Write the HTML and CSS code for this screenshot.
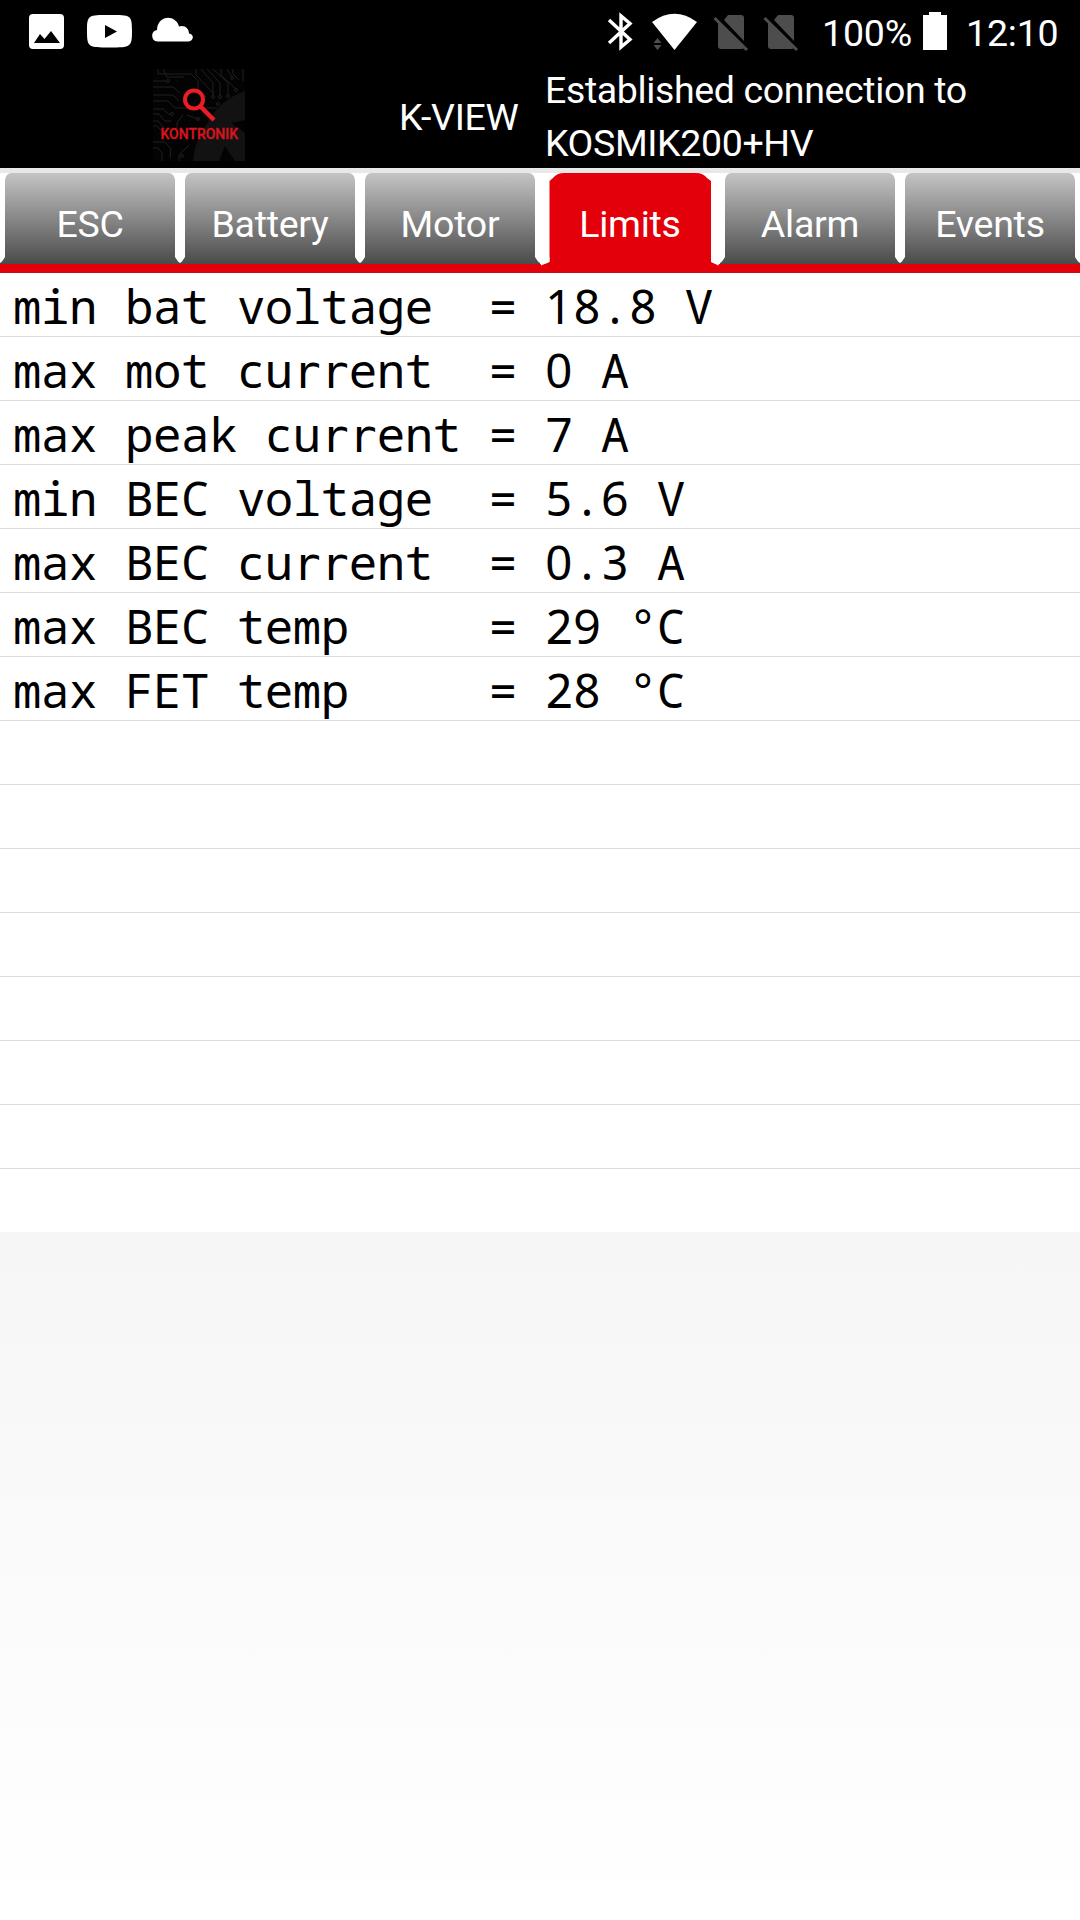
FILE: index.html
```html
<!DOCTYPE html>
<html lang="en">
<head>
<meta charset="utf-8">
<title>K-VIEW</title>
<link rel="stylesheet" href="styles.css">
</head>
<body>
<svg class="defs" aria-hidden="true">
  <defs>
    <linearGradient id="gray" x1="0" y1="0" x2="0" y2="1">
      <stop offset="0" stop-color="#c4c4c4"/><stop offset="1" stop-color="#4b4b4b"/>
    </linearGradient>
    <symbol id="tab" viewBox="0 0 180 91">
      <path fill="url(#gray)" d="M0 91V90L2 88.500L5 84V7Q5.500 1 11 0H169Q174.500 1 175 7V84L178 88.500L180 90V91Z"/>
    </symbol>
    <symbol id="tab-on" viewBox="0 0 180 93">
      <path fill="#e3000b" d="M0 91V90.500L1 93L9.500 88.500V8L13 5Q17 0 24 0H156Q163 0 167 5L171 8V88.500L179 92.500L180 90.500V93H0Z"/>
      <path fill="#fff" d="M0 85L1 92.500L9.500 89V84H0ZM180 84L178.500 92.500L171 89V84Z"/>
    </symbol>
    <symbol id="sim" viewBox="0 0 36 40">
      <path fill="#4d4d4d" d="M11 7L15 2H28Q31 2 31 5V28ZM5 9L31 35Q30 36 28 36H8Q5 36 5 33Z"/>
      <path stroke="#4d4d4d" stroke-width="3" d="M1.500 5L34 37"/>
    </symbol>
  </defs>
</svg>
<div class="status">
  <svg class="status-icons" width="240" height="64" viewBox="0 0 240 64">
    <path fill="#fff" fill-rule="evenodd" d="M33 14H60Q64 14 64 18V45Q64 49 60 49H33Q29 49 29 45V18Q29 14 33 14ZM34 43H60L51 31L44.500 39L40 34Z"/>
    <path fill="#fff" fill-rule="evenodd" d="M109.500 15C131 15 132 15 132 31S131 47.500 109.500 47.500S87 47 87 31S88 15 109.500 15ZM105 25V38L117 31.500Z"/>
    <path fill="#fff" d="M157.500 41.500A5.800 5.800 0 0 1 157 30C157.500 15 175.500 14 179 26.500C184.500 24.500 189 28.500 189 33.500C194.500 34 194 41.500 188 41.500Z"/>
  </svg>
  <svg class="status-icons radio" width="220" height="64" viewBox="600 0 220 64">
    <path fill="none" stroke="#fff" stroke-width="3.400" d="M609 20L630 39.500L621 47V16L630 23.500L609 43"/>
    <path fill="#fff" d="M652 22Q674.500 5.500 697 22L674.500 50Z"/>
    <path fill="#4d4d4d" d="M657.500 38L661.500 43H653.500ZM657.500 50L661.500 45H653.500Z"/>
    <use href="#sim" x="713" y="13" width="36" height="40"/>
    <use href="#sim" x="763" y="13" width="36" height="40"/>
  </svg>
  <span class="percent">100%</span>
  <svg class="battery" width="24" height="38" viewBox="0 0 24 38"><path fill="#fff" d="M0 3H6V0H18V3H24V38H0Z"/></svg>
  <span class="clock">12:10</span>
</div>
<header class="header">
  <svg class="logo" width="92" height="92" viewBox="0 0 92 92">
    <rect width="92" height="92" fill="#030303"/>
    <path fill="#121212" d="M92 22Q66 31 54 55Q42 70 40 92H92V64L78 54L92 51ZM72 77L82 92H66Z" fill-rule="evenodd"/>
    <g fill="none" stroke="#202020" stroke-width="1">
      <path d="M0 12H13M0 18H20L27 24M0 26H20L26 32M0 32H15L22 39H64M0 40H10L17 46M0 45H6L12 52H18M0 52H5L12 60M0 57H4L10 63M0 73H12L18 80L17 89M0 79H5L9 84V92M5 0V5H38L45 12V22L53 28M10 0L14 8H31M43 0V6L60 24M48 0L60 14V27M54 0L67 14V27M60 0L75 14V26M68 0V6L83 20M74 0L79 8M80 0V5L86 11M90 0V12M26 92V86L36 76M30 46L24 54V60M34 46L45 50"/>
      <circle cx="15" cy="12" r="1.500"/><circle cx="65" cy="35" r="1.500"/><circle cx="60" cy="28" r="1.500"/><circle cx="67" cy="28" r="1.500"/><circle cx="75" cy="27" r="1.500"/><circle cx="79" cy="9" r="1.500"/><circle cx="19" cy="45" r="1.500"/><circle cx="45" cy="50" r="1.500"/><circle cx="29" cy="87" r="1.500"/><circle cx="83" cy="21" r="1.500"/>
    </g>
    <circle cx="41" cy="30.500" r="9" fill="none" stroke="#ec1c24" stroke-width="4"/>
    <path stroke="#ec1c24" stroke-width="4.500" d="M47 37L61 51"/>
    <text class="brand" x="7.500" y="70" textLength="77.500" lengthAdjust="spacingAndGlyphs">KONTRONIK</text>
  </svg>
  <h1 class="title">K-VIEW</h1>
  <p class="message">Established connection to<br>KOSMIK200+HV</p>
</header>
<nav class="tabs">
  <div class="tab"><svg class="tab-bg" height="91"><use href="#tab"/></svg><span>ESC</span></div>
  <div class="tab"><svg class="tab-bg" height="91"><use href="#tab"/></svg><span>Battery</span></div>
  <div class="tab"><svg class="tab-bg" height="91"><use href="#tab"/></svg><span>Motor</span></div>
  <div class="tab"><svg class="tab-bg" height="93"><use href="#tab-on"/></svg><span>Limits</span></div>
  <div class="tab"><svg class="tab-bg" height="91"><use href="#tab"/></svg><span>Alarm</span></div>
  <div class="tab"><svg class="tab-bg" height="91"><use href="#tab"/></svg><span>Events</span></div>
</nav>
<main class="list">
  <div class="row">min bat voltage  = <span class="n">1</span>8.8 V</div>
  <div class="row">max mot cu<span class="r">rr</span>ent  = <span class="n">0</span> A</div>
  <div class="row">max peak cu<span class="r">rr</span>ent = 7 A</div>
  <div class="row">min BEC voltage  = 5.6 V</div>
  <div class="row">max BEC cu<span class="r">rr</span>ent  = <span class="n">0</span>.3 A</div>
  <div class="row">max BEC temp     = 29 °C</div>
  <div class="row">max FET temp     = 28 °C</div>
  <div class="row"></div><div class="row"></div><div class="row"></div><div class="row"></div>
  <div class="row"></div><div class="row"></div><div class="row"></div><div class="row"></div>
</main>
<footer class="rest"></footer>
</body>
</html>
```
FILE: styles.css
```css
* { box-sizing: border-box; }
body { margin: 0; width: 1080px; height: 1920px; display: flex; flex-direction: column; background: #fff; font-family: Roboto, sans-serif; overflow: hidden; }
.defs { position: absolute; width: 0; height: 0; }
.status { height: 64px; flex: none; display: flex; background: #000; color: #fff; font-size: 37.5px; line-height: 66px; letter-spacing: -.2px; }
.status-icons { flex: none; }
.radio { margin-left: 360px; }
.percent { width: 102px; margin-left: 2px; white-space: nowrap; }
.battery { margin: 12px 0 0 -1px; }
.clock { margin-left: 19px; white-space: nowrap; }
.header { height: 104px; flex: none; display: flex; background: #000; color: #fff; }
.logo { margin: 5px 0 0 153px; }
.title { margin: 0 0 0 154px; width: 146px; font-weight: 400; font-size: 37.5px; line-height: 106px; letter-spacing: -.3px; white-space: nowrap; }
.message { margin: 0; font-size: 37.5px; line-height: 53px; letter-spacing: -.37px; white-space: nowrap; }
.brand { font: 500 15.4px Roboto, sans-serif; fill: #d6151d; stroke: #d6151d; stroke-width: .4px; }
.tabs { height: 105px; flex: none; display: grid; grid-template-columns: repeat(6, 180px); border-top: 5px solid #e8e8e8; background: linear-gradient(#fff 91px, #e3000b 91px); border-bottom: 1px solid #c40a14; }
.tab { display: grid; color: #fff; font-size: 37.5px; line-height: 103px; letter-spacing: -.25px; text-align: center; }
.tab > * { grid-area: 1 / 1; }
.tab-bg { display: block; width: 180px; }
.list { flex: none; display: grid; grid-auto-rows: 64px; height: 959px; background: #fff; overflow: hidden; }
.row { padding: 1px 0 0 13px; border-bottom: 1px solid #dcdcdc; font-family: "Droid Sans Mono", "Noto Sans Mono", "DejaVu Sans Mono", monospace; font-size: 47.4px; line-height: 63px; letter-spacing: -.45px; white-space: pre; color: #000; }
.r { font-family: "DejaVu Sans Mono", monospace; font-size: 46.5px; letter-spacing: 0; line-height: 1; }
.n { display: inline-block; width: 28px; text-align: center; font-family: "Noto Sans", sans-serif; letter-spacing: 0; line-height: 1; }
.row:last-child { border-bottom: 0; }
.rest { flex: 1; background: linear-gradient(#f6f6f6, #fff); }
```
